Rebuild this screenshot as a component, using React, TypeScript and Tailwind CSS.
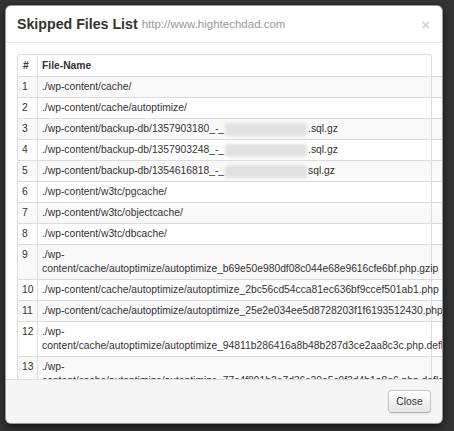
import React from "react";

const Blur = () => (
  <span className="inline-block w-[82px] h-[13px] align-middle mx-[1px] bg-[#e1e1e1] rounded-[3px] blur-[1.5px]" />
);

const rows: { n: number; lines: React.ReactNode[] }[] = [
  { n: 1, lines: ["./wp-content/cache/"] },
  { n: 2, lines: ["./wp-content/cache/autoptimize/"] },
  { n: 3, lines: [<>./wp-content/backup-db/1357903180_-_<Blur />.sql.gz</>] },
  { n: 4, lines: [<>./wp-content/backup-db/1357903248_-_<Blur />.sql.gz</>] },
  { n: 5, lines: [<>./wp-content/backup-db/1354616818_-_<Blur />sql.gz</>] },
  { n: 6, lines: ["./wp-content/w3tc/pgcache/"] },
  { n: 7, lines: ["./wp-content/w3tc/objectcache/"] },
  { n: 8, lines: ["./wp-content/w3tc/dbcache/"] },
  {
    n: 9,
    lines: ["./wp-", "content/cache/autoptimize/autoptimize_b69e50e980df08c044e68e9616cfe6bf.php.gzip"],
  },
  { n: 10, lines: ["./wp-content/cache/autoptimize/autoptimize_2bc56cd54cca81ec636bf9ccef501ab1.php"] },
  { n: 11, lines: ["./wp-content/cache/autoptimize/autoptimize_25e2e034ee5d8728203f1f6193512430.php"] },
  {
    n: 12,
    lines: ["./wp-", "content/cache/autoptimize/autoptimize_94811b286416a8b48b287d3ce2aa8c3c.php.deflate"],
  },
  {
    n: 13,
    lines: ["./wp-", "content/cache/autoptimize/autoptimize_77c4f891b2e7d36c20e5c9f3d4b1a8e6.php.deflate"],
  },
];

export default function App() {
  return (
    <div className="w-[454px] h-[431px] bg-[#343434] pt-[5px] pl-[5px] overflow-hidden font-['Liberation_Sans','Helvetica_Neue',Arial,sans-serif] text-[#333]">
      <div className="w-[438px] h-[419px] bg-white border border-black/40 rounded-[6px] shadow-[0_3px_8px_rgba(0,0,0,0.6)] flex flex-col overflow-hidden">
        {/* header */}
        <div className="h-[37px] shrink-0 border-b border-[#e9e9e9] flex items-center pl-[11px] pr-[12px]">
          <h3 className="text-[14.2px] leading-none font-bold text-[#333]">Skipped Files List</h3>
          <span className="ml-[4px] text-[11.5px] leading-none text-[#999] mt-[1px]">http://www.hightechdad.com</span>
          <span className="ml-auto text-[15px] leading-none font-bold text-black/20">×</span>
        </div>

        {/* body */}
        <div className="flex-1 overflow-hidden pt-[11px] pl-[11px] text-[10.3px] leading-[14px]">
          <div className="flex w-[415px] bg-white border-t border-l border-r border-[#ddd] rounded-t-[4px] font-bold">
            <div className="w-[20px] shrink-0 border-r border-[#ddd] pl-[5px] pt-[4px] pb-[3px]">#</div>
            <div className="flex-1 pl-[4px] pt-[4px] pb-[3px]">File-Name</div>
          </div>
          {rows.map((r) => (
            <div
              key={r.n}
              className={
                r.n % 2 === 1
                  ? "flex w-[425px] border-t border-l border-[#ddd] bg-[#f9f9f9]"
                  : "flex w-[425px] border-t border-l border-[#ddd] bg-white"
              }
            >
              <div className="w-[20px] shrink-0 border-r border-[#ddd] pl-[4px] py-[3px]">{r.n}</div>
              <div className="w-[394px] shrink-0 border-r border-[#ddd] pl-[4px] py-[3px] whitespace-nowrap">
                {r.lines.map((l, i) => (
                  <div key={i}>{l}</div>
                ))}
              </div>
              <div className="flex-1" />
            </div>
          ))}
        </div>

        {/* footer */}
        <div className="h-[44px] shrink-0 border-t border-[#ddd] bg-[#f5f5f5] flex items-center justify-end pr-[11px]">
          <button className="h-[23px] w-[43px] text-[10.3px] text-[#333] rounded-[4px] border border-[#c8c8c8] border-b-[#b0b0b0] bg-linear-to-b from-white to-[#e6e6e6] shadow-[inset_0_1px_0_rgba(255,255,255,0.3),0_1px_2px_rgba(0,0,0,0.08)]">
            Close
          </button>
        </div>
      </div>
    </div>
  );
}
